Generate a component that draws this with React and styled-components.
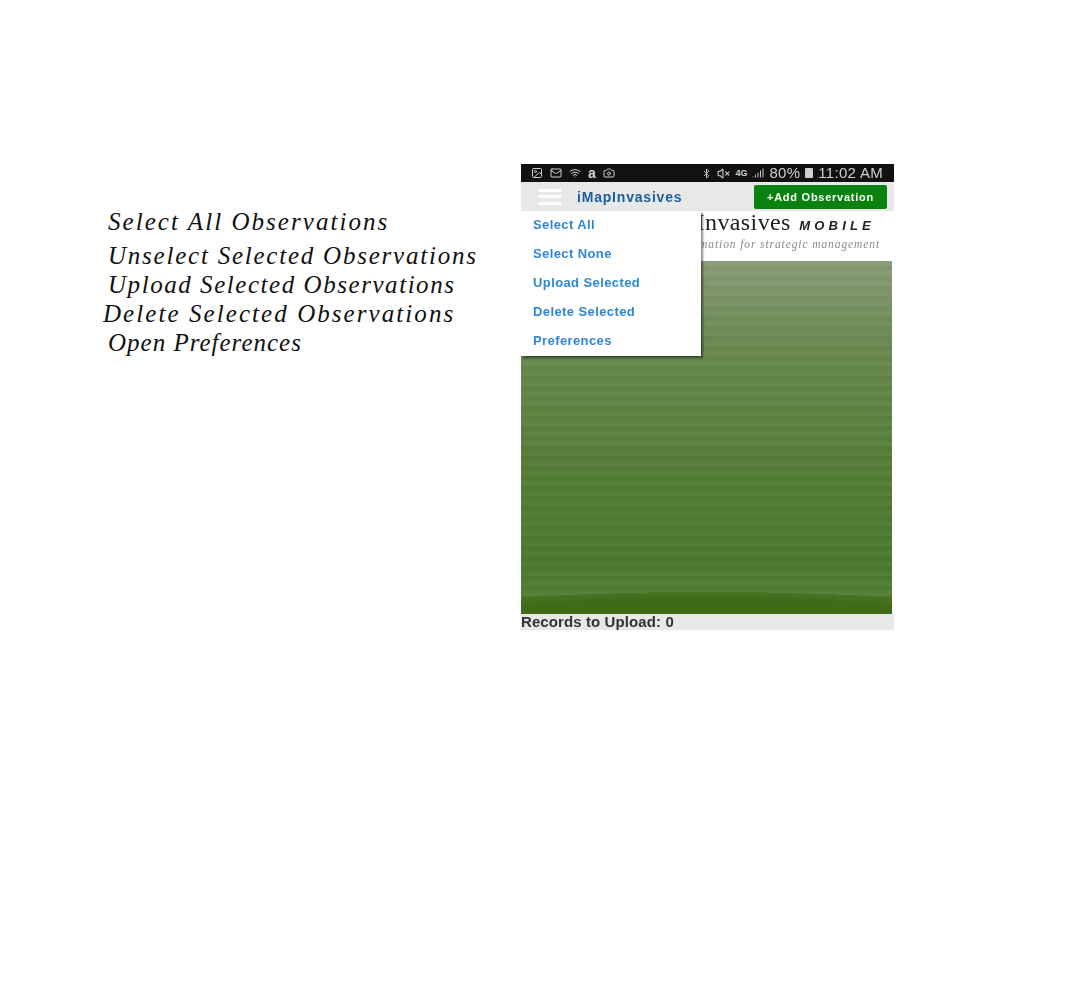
import React from 'react'
import styled, { createGlobalStyle } from 'styled-components'
import { Image, Mail, Wifi, Bluetooth, VolumeX, Signal, Camera } from 'lucide-react'

const Global = createGlobalStyle`
  html, body {
    margin: 0;
    background: #fff;
    font-family: 'Liberation Sans', sans-serif;
  }
`

const notes = [
  { text: 'Select All Observations', track: 2.05, top: 0, left: 5 },
  { text: 'Unselect Selected Observations', track: 1.77, top: 9, left: 5 },
  { text: 'Upload Selected Observations', track: 1.55, top: 4, left: 5 },
  { text: 'Delete Selected Observations', track: 2.07, top: 4, left: 0 },
  { text: 'Open Preferences', track: 1, top: 4, left: 5 },
]

const menuItems = ['Select All', 'Select None', 'Upload Selected', 'Delete Selected', 'Preferences']

export default function App() {
  return (
    <Page>
      <Global />
      <Notes>
        {notes.map(n => (
          <Note key={n.text} $track={n.track} $top={n.top} $left={n.left}>
            {n.text}
          </Note>
        ))}
      </Notes>
      <Phone>
        <StatusBar>
          <StatusGroup $gap={7}>
            <Image size={12} />
            <Mail size={12} />
            <Wifi size={12} />
            <AmazonMark>a</AmazonMark>
            <Camera size={12} />
          </StatusGroup>
          <StatusGroup $gap={5}>
            <Bluetooth size={11} />
            <VolumeX size={13} />
            <NetworkMark>4G</NetworkMark>
            <Signal size={12} />
            <StatusText>80%</StatusText>
            <Battery />
            <StatusText>11:02 AM</StatusText>
          </StatusGroup>
        </StatusBar>
        <Header>
          <Burger>
            <span />
            <span />
            <span />
          </Burger>
          <Title>iMapInvasives</Title>
          <AddButton>+Add Observation</AddButton>
        </Header>
        <Content>
          <Banner>
            <BannerTitle>
              iMapInvasives <BannerMobile>MOBILE</BannerMobile>
            </BannerTitle>
            <BannerTag>information for strategic management</BannerTag>
          </Banner>
          <Field />
          <Menu>
            {menuItems.map(item => (
              <MenuItem key={item}>{item}</MenuItem>
            ))}
          </Menu>
        </Content>
        <Footer>Records to Upload: 0</Footer>
      </Phone>
    </Page>
  )
}

const Page = styled.div`
  display: flex;
  align-items: flex-start;
  width: 1087px;
  height: 1000px;
  padding: 164px 0 0 103px;
  box-sizing: border-box;
  overflow: hidden;
`

const Notes = styled.div`
  display: flex;
  flex-direction: column;
  width: 418px;
  padding-top: 45px;
`

const Note = styled.div`
  margin-top: ${props => props.$top}px;
  margin-left: ${props => props.$left}px;
  font-family: 'Liberation Serif', serif;
  font-style: italic;
  font-size: 25px;
  line-height: 25px;
  letter-spacing: ${props => props.$track}px;
  white-space: nowrap;
  color: #111;
`

const Phone = styled.div`
  display: flex;
  flex-direction: column;
  width: 373px;
  height: 466px;
  filter: blur(0.35px);
`

const StatusBar = styled.div`
  display: flex;
  align-items: center;
  justify-content: space-between;
  height: 18px;
  padding: 0 11px 0 10px;
  background: #111;
  color: #cfcfcf;
`

const StatusGroup = styled.div`
  display: flex;
  align-items: center;
  gap: ${props => props.$gap}px;
`

const StatusText = styled.span`
  font-size: 15px;
  line-height: 18px;
  letter-spacing: 0.3px;
  white-space: nowrap;
`

const AmazonMark = styled.span`
  font-size: 14px;
  font-weight: 700;
  line-height: 11px;
`

const NetworkMark = styled.span`
  font-size: 9px;
  font-weight: 700;
`

const Battery = styled.span`
  width: 8px;
  height: 10px;
  background: #cfcfcf;
  border-radius: 1px;
`

const Header = styled.div`
  display: flex;
  align-items: center;
  height: 29px;
  padding: 0 7px 0 17px;
  background: #e8e8e8;
`

const Burger = styled.div`
  display: flex;
  flex-direction: column;
  justify-content: space-between;
  width: 23px;
  height: 16px;

  span {
    height: 3px;
    background: #fff;
  }
`

const Title = styled.div`
  margin-left: 16px;
  font-size: 14px;
  font-weight: 700;
  letter-spacing: 0.8px;
  color: #1a5ea0;
`

const AddButton = styled.div`
  display: flex;
  align-items: center;
  justify-content: center;
  width: 133px;
  height: 24px;
  margin-left: auto;
  border-radius: 2px;
  background: #0a820f;
  color: #fff;
  font-size: 11px;
  font-weight: 700;
  letter-spacing: 0.75px;
`

const Content = styled.div`
  position: relative;
  display: flex;
  flex-direction: column;
  flex: 1;
  min-height: 0;
  margin-right: 2px;
`

const Banner = styled.div`
  display: flex;
  flex-direction: column;
  align-items: flex-end;
  height: 50px;
  padding-right: 12px;
  background: #fff;
  overflow: hidden;
`

const BannerTitle = styled.div`
  font-family: 'Liberation Serif', serif;
  font-size: 24px;
  line-height: 23px;
  letter-spacing: 0.4px;
  color: #222;
  white-space: nowrap;
`

const BannerMobile = styled.span`
  margin: 0 5px 0 2px;
  font-family: 'Liberation Sans', sans-serif;
  font-size: 13px;
  font-style: italic;
  font-weight: 700;
  letter-spacing: 4.2px;
`

const BannerTag = styled.div`
  margin-top: 1px;
  font-family: 'Liberation Serif', serif;
  font-size: 11.5px;
  font-style: italic;
  letter-spacing: 0.9px;
  color: #8a8a8a;
  white-space: nowrap;
`

const Field = styled.div`
  flex: 1;
  background:
    radial-gradient(ellipse 280px 22px at 50% 100%, #3f6b18 0 70%, rgba(63, 107, 24, 0.55) 100%, transparent 100%),
    repeating-linear-gradient(to bottom, rgba(255, 255, 255, 0.022) 0 5px, rgba(0, 0, 0, 0.022) 5px 10px),
    linear-gradient(to bottom, #8a9c78 0, #6a8a52 80px, #557e38 200px, #4c7a2e 300px, #568036 350px);
`

const Menu = styled.div`
  position: absolute;
  top: 0;
  left: 0;
  width: 180px;
  height: 145px;
  display: flex;
  flex-direction: column;
  padding: 0 12px;
  box-sizing: border-box;
  background: #fff;
  box-shadow: 2px 2px 2px rgba(0, 0, 0, 0.45);
`

const MenuItem = styled.div`
  height: 29px;
  line-height: 28px;
  font-size: 13px;
  font-weight: 700;
  letter-spacing: 0.4px;
  color: #2f86d6;
  white-space: nowrap;
`

const Footer = styled.div`
  height: 16px;
  line-height: 15px;
  background: #e8e8e8;
  color: #333;
  font-size: 15px;
  font-weight: 700;
  letter-spacing: 0.1px;
  white-space: nowrap;
`
